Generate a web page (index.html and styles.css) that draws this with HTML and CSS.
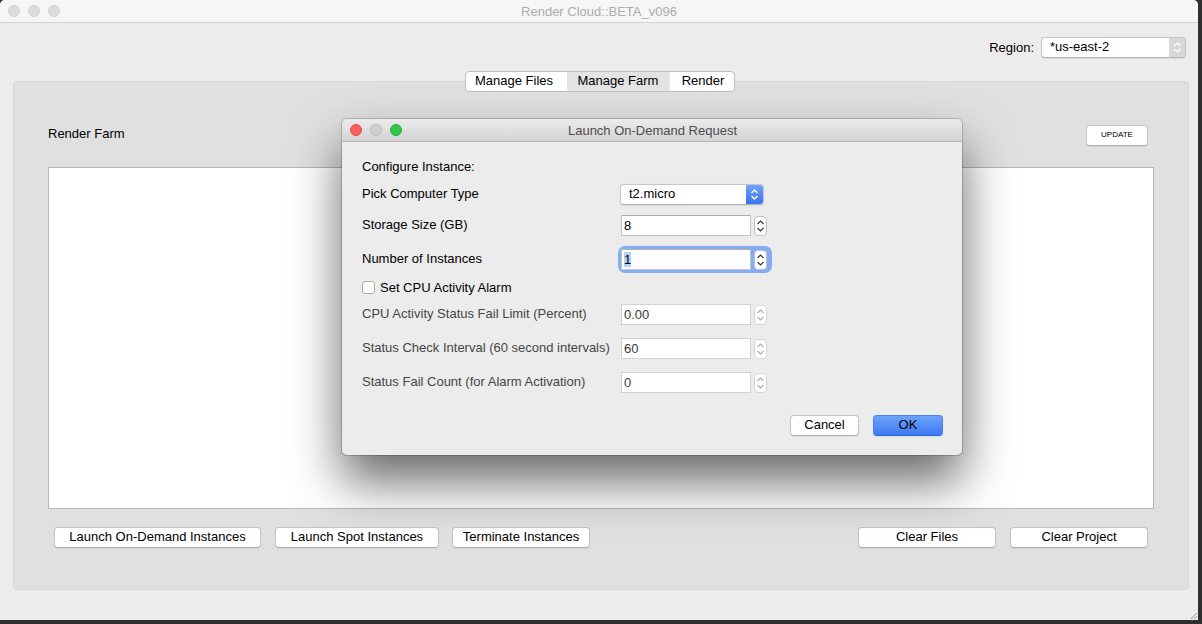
FILE: index.html
```html
<!DOCTYPE html>
<html>
<head>
<meta charset="utf-8">
<link rel="stylesheet" href="styles.css">
</head>
<body>
<div class="window">
  <div class="titlebar">
    <div class="lights">
      <span class="light gray"></span><span class="light gray"></span><span class="light gray"></span>
    </div>
    <div class="title inactive">Render Cloud::BETA_v096</div>
  </div>
  <div class="region-row">
    <span class="region-label">Region:</span>
    <div class="popup region-popup">
      <span class="popup-text">*us-east-2</span>
      <span class="popup-arrow gray-arrow">
        <svg width="9" height="13" viewBox="0 0 9 13"><path d="M1.5 5 L4.5 2 L7.5 5 M1.5 8 L4.5 11 L7.5 8" fill="none" stroke="#fff" stroke-width="1.4"/></svg>
      </span>
    </div>
  </div>
  <div class="tabs-wrap">
    <div class="tabs">
      <span class="tab t1">Manage Files</span>
      <span class="tab t2 selected">Manage Farm</span>
      <span class="tab t3">Render</span>
    </div>
  </div>
  <div class="panel">
    <div class="panel-head">
      <span class="label">Render Farm</span>
      <button class="btn update">UPDATE</button>
    </div>
    <div class="listbox"></div>
    <div class="bottom-row">
      <div class="btn-group">
        <button class="btn w207">Launch On-Demand Instances</button>
        <button class="btn w164">Launch Spot Instances</button>
        <button class="btn w138 g14">Terminate Instances</button>
      </div>
      <div class="btn-group right">
        <button class="btn w138">Clear Files</button>
        <button class="btn w138">Clear Project</button>
      </div>
    </div>
  </div>
  <svg class="grip" width="9" height="9" viewBox="0 0 9 9"><path d="M8 2 L2 8 M8 5 L5 8" stroke="#9a9a9a" stroke-width="1"/></svg>

  <div class="dialog">
    <div class="dtitlebar">
      <div class="lights">
        <span class="light red"></span><span class="light gray2"></span><span class="light green"></span>
      </div>
      <div class="title dtitle">Launch On-Demand Request</div>
    </div>
    <div class="dbody">
      <div class="row r-config"><span class="dlabel">Configure Instance:</span></div>
      <div class="row r-pick">
        <span class="dlabel">Pick Computer Type</span>
        <div class="popup type-popup">
          <span class="popup-text">t2.micro</span>
          <span class="popup-arrow blue-arrow">
            <svg width="9" height="13" viewBox="0 0 9 13"><path d="M1.5 5 L4.5 2 L7.5 5 M1.5 8 L4.5 11 L7.5 8" fill="none" stroke="#fff" stroke-width="1.4"/></svg>
          </span>
        </div>
      </div>
      <div class="row r-storage">
        <span class="dlabel">Storage Size (GB)</span>
        <div class="field-group">
          <span class="field">8</span>
          <span class="stepper"><svg width="11" height="16" viewBox="0 0 11 16"><path d="M2.5 6 L5.5 3 L8.5 6 M2.5 10 L5.5 13 L8.5 10" fill="none" stroke="#333" stroke-width="1.1"/></svg></span>
        </div>
      </div>
      <div class="row r-number">
        <span class="dlabel">Number of Instances</span>
        <div class="field-group focus">
          <span class="field"><span class="sel">1</span></span>
          <span class="stepper"><svg width="11" height="16" viewBox="0 0 11 16"><path d="M2.5 6 L5.5 3 L8.5 6 M2.5 10 L5.5 13 L8.5 10" fill="none" stroke="#333" stroke-width="1.1"/></svg></span>
        </div>
      </div>
      <div class="row r-check">
        <label class="check"><span class="box"></span><span class="dlabel">Set CPU Activity Alarm</span></label>
      </div>
      <div class="row r-cpu disabled">
        <span class="dlabel">CPU Activity Status Fail Limit (Percent)</span>
        <div class="field-group">
          <span class="field">0.00</span>
          <span class="stepper"><svg width="11" height="16" viewBox="0 0 11 16"><path d="M2.5 6 L5.5 3 L8.5 6 M2.5 10 L5.5 13 L8.5 10" fill="none" stroke="#aaa" stroke-width="1.1"/></svg></span>
        </div>
      </div>
      <div class="row r-int disabled">
        <span class="dlabel">Status Check Interval (60 second intervals)</span>
        <div class="field-group">
          <span class="field">60</span>
          <span class="stepper"><svg width="11" height="16" viewBox="0 0 11 16"><path d="M2.5 6 L5.5 3 L8.5 6 M2.5 10 L5.5 13 L8.5 10" fill="none" stroke="#aaa" stroke-width="1.1"/></svg></span>
        </div>
      </div>
      <div class="row r-fail disabled">
        <span class="dlabel">Status Fail Count (for Alarm Activation)</span>
        <div class="field-group">
          <span class="field">0</span>
          <span class="stepper"><svg width="11" height="16" viewBox="0 0 11 16"><path d="M2.5 6 L5.5 3 L8.5 6 M2.5 10 L5.5 13 L8.5 10" fill="none" stroke="#aaa" stroke-width="1.1"/></svg></span>
        </div>
      </div>
      <div class="drow-buttons">
        <button class="btn cancel">Cancel</button>
        <button class="btn ok">OK</button>
      </div>
    </div>
  </div>
</div>
</body>
</html>
```

FILE: styles.css
```css
* { box-sizing: border-box; }
html, body { margin: 0; padding: 0; }
body {
  background: #2e302e;
  width: 1202px;
  height: 624px;
  overflow: hidden;
  font-family: "Liberation Sans", Arial, sans-serif;
  font-size: 13px;
  color: #000;
}
.window {
  position: relative;
  width: 1198px;
  height: 620px;
  background: #ececec;
  border-radius: 5px 5px 0 0;
  display: flex;
  flex-direction: column;
}
.titlebar {
  position: relative;
  height: 23px;
  background: #f6f6f6;
  border-bottom: 1px solid #d3d3d3;
  border-radius: 5px 5px 0 0;
  display: flex;
  align-items: center;
  justify-content: center;
}
.lights {
  position: absolute;
  left: 8px;
  top: 5px;
  display: flex;
  gap: 8px;
}
.light {
  width: 12px;
  height: 12px;
  border-radius: 50%;
  display: block;
}
.light.gray { background: #dcdcdc; border: 1px solid #d0d0d0; }
.light.gray2 { background: #cfcfcf; border: 1px solid #bcbcbc; }
.light.red { background: #fc605c; border: 1px solid #de4a46; }
.light.green { background: #34c84a; border: 1px solid #27aa35; }
.title { font-size: 13px; }
.title.inactive { color: #acacac; }

.region-row {
  margin-top: 14px;
  height: 21px;
  display: flex;
  justify-content: flex-end;
  align-items: center;
  padding-right: 12px;
  gap: 7px;
}
.region-label { font-size: 13px; }
.popup {
  height: 21px;
  background: #fff;
  border: 1px solid #c6c6c6;
  border-bottom-color: #b5b5b5;
  border-radius: 4px;
  display: flex;
  align-items: stretch;
  overflow: hidden;
  box-shadow: 0 0.5px 1px rgba(0,0,0,0.08);
}
.popup-text {
  flex: 1;
  padding-left: 8px;
  line-height: 18px;
}
.popup-arrow {
  width: 16px;
  display: flex;
  align-items: center;
  justify-content: center;
}
.region-popup { width: 145px; }
.gray-arrow { background: #d8d8d8; }
.blue-arrow { background: linear-gradient(#6fa3f8, #3b73ee); width: 17px; }

.tabs-wrap {
  margin-top: 13px;
  display: flex;
  justify-content: center;
  position: relative;
  z-index: 1;
  padding-left: 1px;
}
.tabs {
  display: flex;
  height: 21px;
  background: #fff;
  border: 1px solid #bfbfbf;
  border-radius: 4px;
  overflow: hidden;
}
.tab {
  line-height: 18px;
  text-align: center;
}
.tab.t1 { width: 101px; padding-right: 4px; }
.tab.t2 { width: 103px; }
.tab.t3 { width: 64px; padding-left: 3px; }
.tab.selected { background: #e3e3e3; }

.panel {
  margin-top: -11px;
  margin-left: 13px;
  width: 1176px;
  height: 509px;
  background: #e0e0e0;
  border: 1px solid #d6d6d6;
  border-radius: 4px;
  padding: 43px 34px 0 34px;
}
.panel-head {
  height: 21px;
  display: flex;
  justify-content: space-between;
  align-items: center;
}
.label { font-size: 13px; position: relative; top: -2px; }
.btn {
  font-family: "Liberation Sans", Arial, sans-serif;
  font-size: 13px;
  height: 21px;
  padding: 0 0 2px 0;
  background: #fff;
  border: 1px solid #c4c4c4;
  border-bottom-color: #adadad;
  border-radius: 4px;
  color: #000;
  line-height: 16px;
  box-shadow: 0 0.5px 1px rgba(0,0,0,0.06);
}
.btn.update {
  width: 62px;
  font-size: 8px;
  margin-right: 6px;
  padding: 0 0 1px 0;
}
.listbox {
  margin-top: 21px;
  height: 342px;
  background: #fff;
  border: 1px solid #b6b6b6;
}
.bottom-row {
  margin-top: 18px;
  display: flex;
  justify-content: space-between;
  padding-left: 6px;
  padding-right: 6px;
}
.btn-group { display: flex; gap: 14px; }
.btn.g14 { margin-left: -1px; }
.w207 { width: 207px; }
.w164 { width: 164px; }
.w138 { width: 138px; }
.grip {
  position: absolute;
  right: 0;
  bottom: 0;
}

/* dialog */
.dialog {
  position: absolute;
  left: 342px;
  top: 119px;
  width: 620px;
  height: 336px;
  background: #ececec;
  border-radius: 5px;
  box-shadow: 0 0 0 1px rgba(0,0,0,0.18), 0 26px 50px rgba(0,0,0,0.6);
  overflow: hidden;
}
.dtitlebar {
  position: relative;
  height: 23px;
  background: linear-gradient(#ebebeb, #d4d4d4);
  border-bottom: 1px solid #b4b4b4;
  display: flex;
  align-items: center;
  justify-content: center;
}
.dtitle { color: #4d4d4d; padding-left: 1px; }
.dbody {
  padding: 0 19px 0 20px;
  display: flex;
  flex-direction: column;
}
.row {
  display: grid;
  grid-template-columns: 259px auto;
  align-items: center;
  height: 21px;
}
.dlabel { font-size: 13px; }
.r-config { margin-top: 14px; height: 22px; }
.r-pick { margin-top: 6px; }
.r-storage { margin-top: 10px; }
.r-number { margin-top: 13px; }
.r-check { margin-top: 9px; height: 16px; }
.r-cpu { margin-top: 9px; }
.r-int { margin-top: 13px; }
.r-fail { margin-top: 13px; }
.row .dlabel { position: relative; top: -1px; }
.r-check .dlabel { top: 0; }

.type-popup { width: 144px; margin-left: -1px; }

.field-group {
  display: flex;
  align-items: center;
  gap: 3px;
  width: 146px;
  height: 21px;
}
.field {
  width: 132px;
  height: 21px;
  background: #fff;
  border: 1px solid #c3c3c3;
  border-top-color: #b0b0b0;
  padding-left: 2px;
  line-height: 19px;
}
.stepper {
  width: 13px;
  height: 20px;
  background: #fff;
  border: 1px solid #c0c0c0;
  border-radius: 4px;
  display: flex;
  align-items: center;
  justify-content: center;
}
.stepper svg { display: block; }
.focus {
  border-radius: 4px;
  box-shadow: 0 0 0 3px #86acf5;
  width: 148px;
  background: #86acf5;
}
.focus .stepper { margin-right: 2px; }
.sel { background: #b5d1f8; }

.check {
  display: flex;
  align-items: center;
  gap: 5px;
}
.box {
  width: 13px;
  height: 13px;
  background: #fff;
  border: 1px solid #adadad;
  border-radius: 3px;
  display: block;
}
.disabled .dlabel { color: #454545; }
.disabled .field { color: #3a3a3a; border-color: #d2d2d2; }
.disabled .stepper { border-color: #d4d4d4; }

.drow-buttons {
  margin-top: 22px;
  display: flex;
  justify-content: flex-end;
  gap: 14px;
}
.btn.cancel { width: 69px; }
.btn.ok {
  width: 70px;
  background: linear-gradient(#6da4fa, #3c79f3);
  border-color: #4a82f1;
  border-bottom-color: #2d63d8;
}
```
